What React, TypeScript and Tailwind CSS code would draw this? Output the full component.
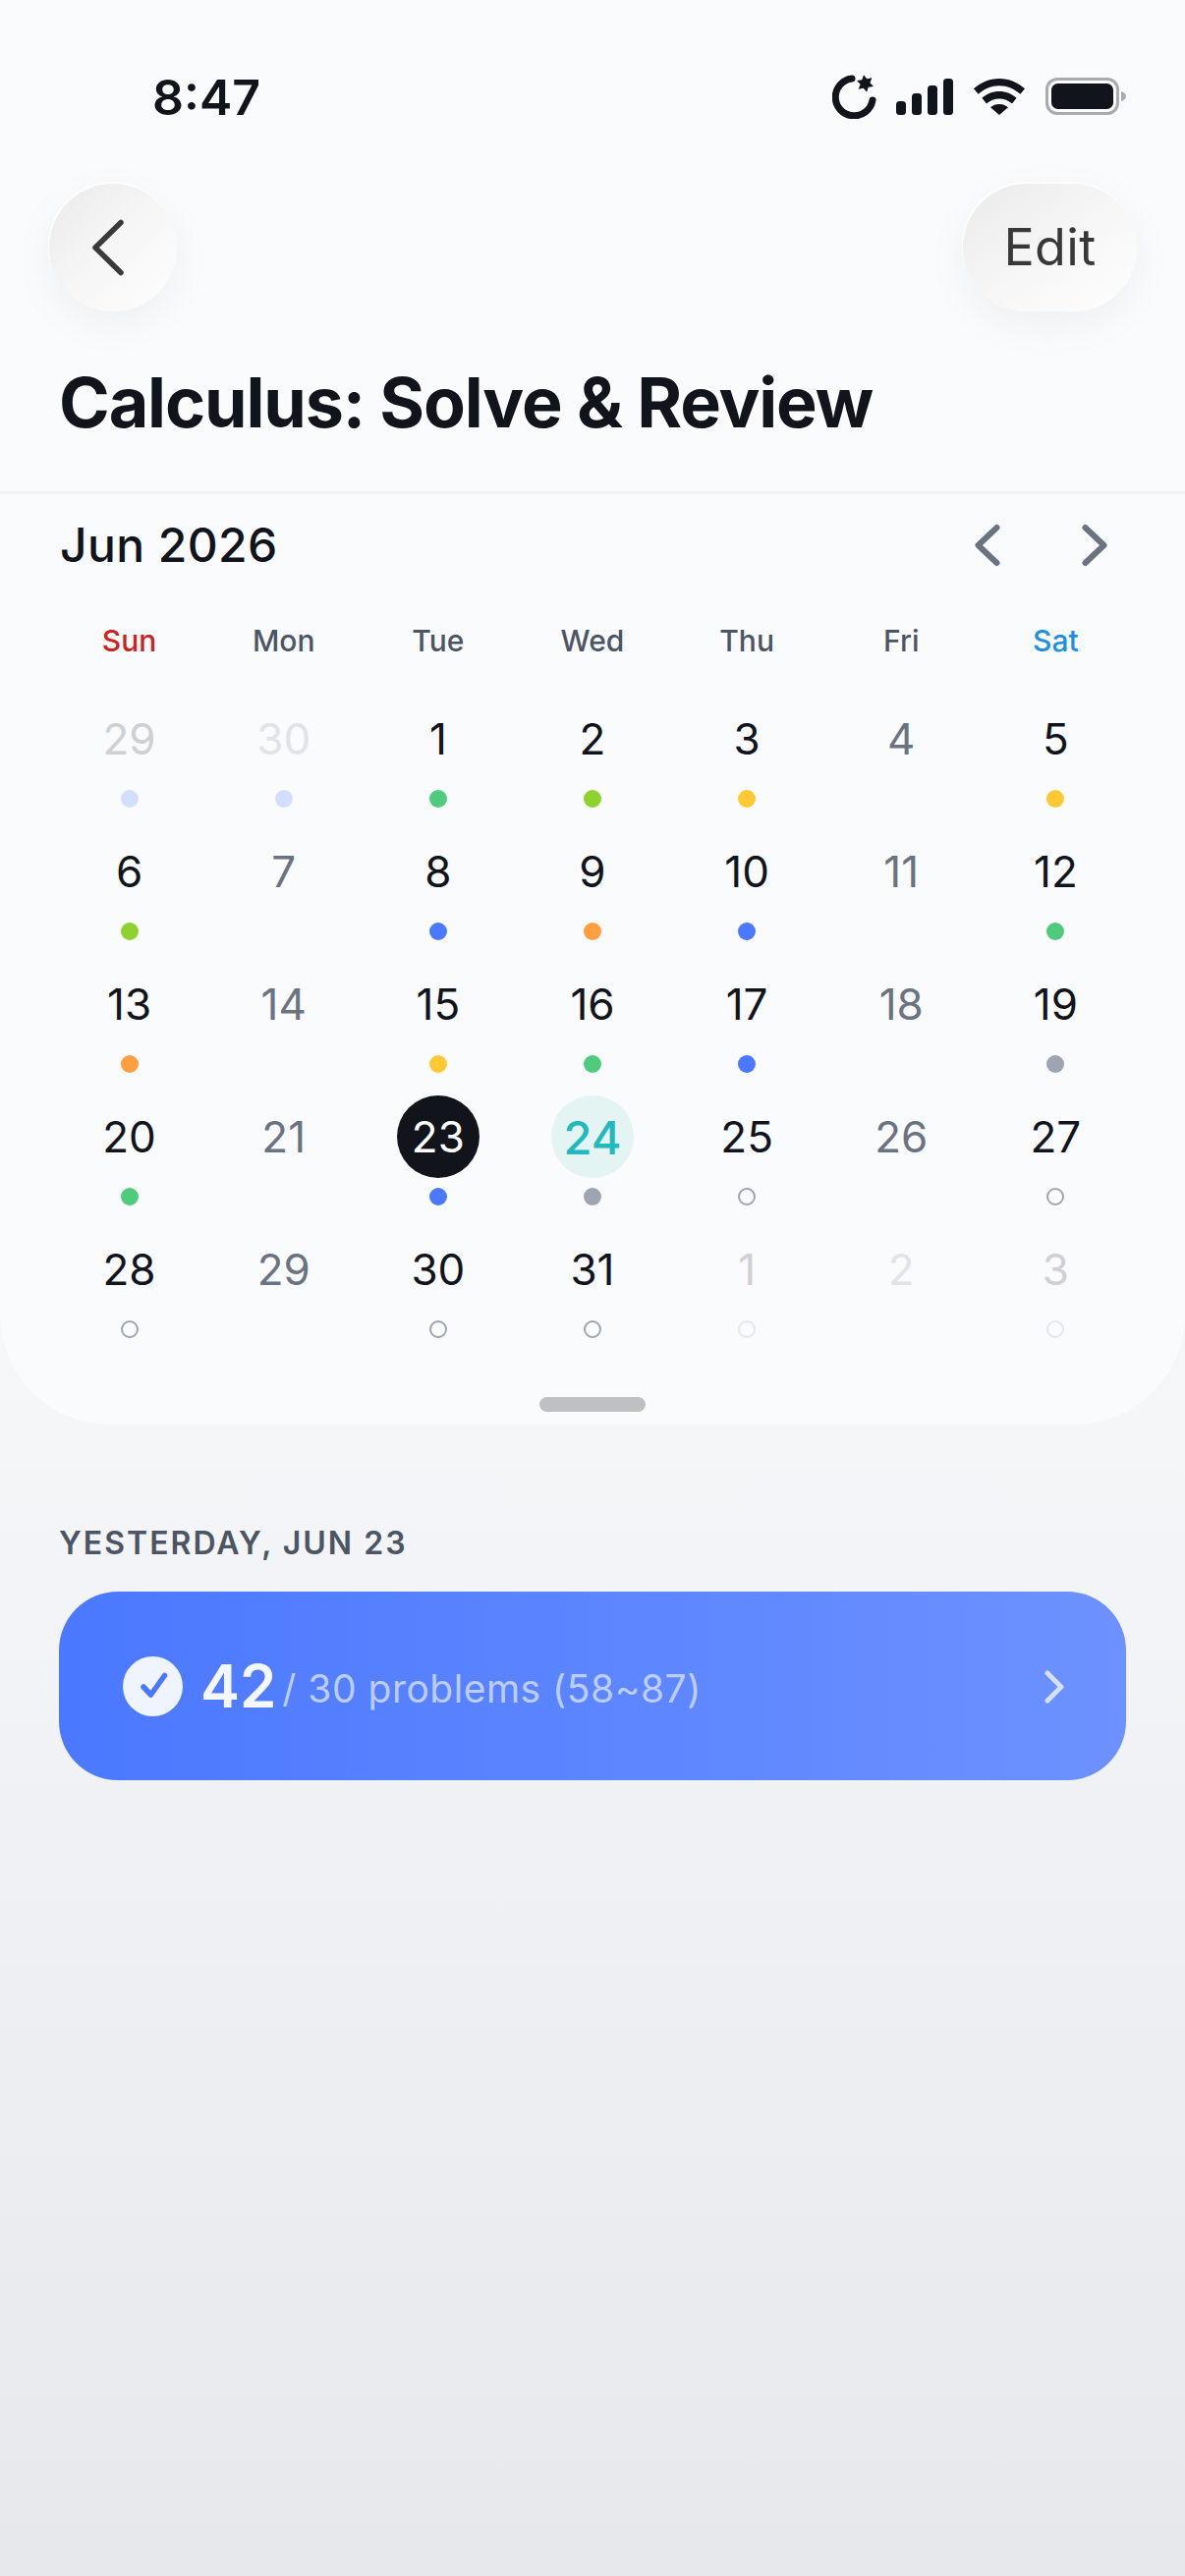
import React from "react";

type D = { n: number; tone: "dark" | "gray" | "faint" | "fainter" | "sel" | "today"; dot?: string; hollow?: "dark" | "light" };

const green = "bg-[#4fcb7c]";
const blue = "bg-[#4a78ff]";
const orange = "bg-[#ff9f3f]";
const yellow = "bg-[#ffc933]";
const lime = "bg-[#8ed22f]";
const gray = "bg-[#9ea4b0]";
const pale = "bg-[#d3dffa]";

const days: D[] = [
  { n: 29, tone: "faint", dot: pale },
  { n: 30, tone: "fainter", dot: pale },
  { n: 1, tone: "dark", dot: green },
  { n: 2, tone: "dark", dot: lime },
  { n: 3, tone: "dark", dot: yellow },
  { n: 4, tone: "gray" },
  { n: 5, tone: "dark", dot: yellow },
  { n: 6, tone: "dark", dot: lime },
  { n: 7, tone: "gray" },
  { n: 8, tone: "dark", dot: blue },
  { n: 9, tone: "dark", dot: orange },
  { n: 10, tone: "dark", dot: blue },
  { n: 11, tone: "gray" },
  { n: 12, tone: "dark", dot: green },
  { n: 13, tone: "dark", dot: orange },
  { n: 14, tone: "gray" },
  { n: 15, tone: "dark", dot: yellow },
  { n: 16, tone: "dark", dot: green },
  { n: 17, tone: "dark", dot: blue },
  { n: 18, tone: "gray" },
  { n: 19, tone: "dark", dot: gray },
  { n: 20, tone: "dark", dot: green },
  { n: 21, tone: "gray" },
  { n: 23, tone: "sel", dot: blue },
  { n: 24, tone: "today", dot: gray },
  { n: 25, tone: "dark", hollow: "dark" },
  { n: 26, tone: "gray" },
  { n: 27, tone: "dark", hollow: "dark" },
  { n: 28, tone: "dark", hollow: "dark" },
  { n: 29, tone: "gray" },
  { n: 30, tone: "dark", hollow: "dark" },
  { n: 31, tone: "dark", hollow: "dark" },
  { n: 1, tone: "faint", hollow: "light" },
  { n: 2, tone: "fainter" },
  { n: 3, tone: "faint", hollow: "light" },
];

const toneClass: Record<D["tone"], string> = {
  dark: "text-[44px] text-[#11141b]",
  gray: "text-[44px] text-[#6b7280]",
  faint: "text-[44px] text-[#cfd0d4]",
  fainter: "text-[44px] text-[#e2e3e6]",
  sel: "text-[44px] text-white bg-[#11141b]",
  today: "text-[47px] text-[#22b8bd] bg-[#e3f4f3] font-medium",
};

function Day({ d }: { d: D }) {
  return (
    <div className="flex flex-col items-center">
      <div className={`flex h-[84px] w-[84px] items-center justify-center rounded-full leading-none ${toneClass[d.tone]}`}>{d.n}</div>
      <div className="mt-[10px] h-[18px] w-[18px]">
        {d.dot && <div className={`h-[18px] w-[18px] rounded-full ${d.dot}`} />}
        {d.hollow === "dark" && <div className="h-[18px] w-[18px] rounded-full border-2 border-[#9ea4b0]" />}
        {d.hollow === "light" && <div className="h-[18px] w-[18px] rounded-full border-2 border-[#e6e7ea]" />}
      </div>
    </div>
  );
}

const starPoints = Array.from({ length: 12 }, (_, i) => {
  const r = i % 2 === 0 ? 9 : 5;
  const a = ((i * 30 + 20) * Math.PI) / 180;
  return `${(33.5 + r * Math.cos(a)).toFixed(2)},${(10 + r * Math.sin(a)).toFixed(2)}`;
}).join(" ");

function StatusIcons() {
  return (
    <div className="flex items-center">
      <svg width="46" height="46" viewBox="0 0 46 46" fill="none" className="mr-[19px]">
        <path d="M20 5A19 19 0 1 0 41 27" stroke="#11141b" strokeWidth="7" strokeLinecap="round" />
        <polygon points={starPoints} fill="#11141b" />
      </svg>
      <svg width="58" height="37" viewBox="0 0 58 37" className="mr-[21px]" fill="#11141b">
        <rect x="0" y="23" width="10" height="14" rx="3.500" />
        <rect x="16" y="15" width="10" height="22" rx="3.500" />
        <rect x="32" y="7" width="10" height="30" rx="3.500" />
        <rect x="48" y="0" width="10" height="37" rx="3.500" />
      </svg>
      <svg width="52" height="37" viewBox="0 0 52 37" className="mr-[21px]" fill="#11141b">
        <path d="M26 0C16 0 7.200 3.800 0 10.200l4.600 5.600C10.600 10.400 17.900 7.200 26 7.200s15.400 3.200 21.400 8.600l4.600-5.600C44.800 3.800 36 0 26 0z" />
        <path d="M26 13c-6.800 0-12.800 2.500-17.600 6.800l4.600 5.600c3.500-3.100 8-5 13-5s9.500 1.900 13 5l4.600-5.600C38.800 15.500 32.800 13 26 13z" />
        <path d="M26 26c-3.500 0-6.500 1.200-9 3.300L26 37l9-7.700C32.500 27.200 29.500 26 26 26z" />
      </svg>
      <svg width="82" height="38" viewBox="0 0 82 38">
        <rect x="1.500" y="1.500" width="72" height="35" rx="10.500" fill="none" stroke="#a9abaf" strokeWidth="3" />
        <rect x="6" y="6" width="63" height="26" rx="6.500" fill="#11141b" />
        <path d="M77 14c2.800.6 5 2.600 5 5s-2.200 4.400-5 5z" fill="#a9abaf" />
      </svg>
    </div>
  );
}

const glass =
  "flex h-[130px] items-center justify-center bg-linear-to-br from-[#eaeaea] via-[#f6f6f6] to-[#fefefe] shadow-[-1px_-2px_1px_#ffffff,0_12px_44px_rgba(0,0,0,0.05)]";

export default function App() {
  return (
    <div className="flex min-h-[2622px] w-[1206px] flex-col bg-linear-to-b from-[#fbfcfe] via-[#f5f6f8] via-55% to-[#e7e8ec] font-['Inter',sans-serif]">
      <div className="rounded-b-[112px] bg-[#fafbfd]">
        <div className="flex h-[187px] items-start justify-between pl-[155px] pr-[60px] pt-[70px]">
          <div className="text-[50px] font-semibold leading-[58px] text-[#11141b]">8:47</div>
          <div className="mt-[5px]">
            <StatusIcons />
          </div>
        </div>
        <div className="flex items-center justify-between pl-[50px] pr-[49px]">
          <div className={`${glass} w-[130px] rounded-full`}>
            <svg width="38" height="58" viewBox="0 0 38 58" fill="none" className="mr-[6px]">
              <path d="M30 3.500L4 29l26 25.500" stroke="#3a3a3a" strokeWidth="5.500" strokeLinecap="round" strokeLinejoin="round" />
            </svg>
          </div>
          <div className={`${glass} w-[177px] rounded-[65px] text-[52px] leading-none tracking-[0.3px] text-[#383838]`}>Edit</div>
        </div>
        <div className="border-b-[3px] border-[#f1f2f5] pb-[45px] pl-[60px] pt-[48px]">
          <div className="text-[70px] font-bold leading-[90px] tracking-[-1.150px] text-[#11141b]">Calculus: Solve &amp; Review</div>
        </div>
        <div className="flex h-[103px] items-center justify-between pl-[61px] pr-[79px]">
          <div className="text-[48px] font-medium leading-none tracking-[0.4px] text-[#11141b]">Jun 2026</div>
          <div className="flex items-center gap-[83px]">
            <svg width="26" height="44" viewBox="0 0 26 44" fill="none">
              <path d="M22.500 4L3.500 22l19 18" stroke="#6b7280" strokeWidth="6" strokeLinecap="round" strokeLinejoin="round" />
            </svg>
            <svg width="26" height="44" viewBox="0 0 26 44" fill="none">
              <path d="M3.500 4l19 18-19 18" stroke="#6b7280" strokeWidth="6" strokeLinecap="round" strokeLinejoin="round" />
            </svg>
          </div>
        </div>
        <div className="grid h-[92px] grid-cols-7 items-start px-[53px] pt-[30px] text-center text-[30px] font-medium leading-[32px] text-[#4b5563]">
          <div className="text-[#cc2222]">Sun</div>
          <div>Mon</div>
          <div>Tue</div>
          <div>Wed</div>
          <div>Thu</div>
          <div>Fri</div>
          <div className="text-[#1f8fe0]">Sat</div>
        </div>
        <div className="grid grid-cols-7 gap-y-[23px] px-[53px] pt-[12px]">
          {days.map((d, i) => (
            <Day key={i} d={d} />
          ))}
        </div>
        <div className="flex justify-center pb-[13px] pt-[60px]">
          <div className="h-[15px] w-[108px] rounded-full bg-[#bfc0c4]" />
        </div>
      </div>

      <div className="px-[60px] pt-[103px]">
        <div className="text-[32px] font-semibold leading-[36px] tracking-[2px] text-[#4b5563]">YESTERDAY, JUN 23</div>
        <div className="mt-[31px] flex h-[192px] items-center rounded-[60px] bg-linear-to-r from-[#4a78ff] to-[#6d91ff] pl-[65px] pr-[63px]">
          <div className="flex h-[61px] w-[61px] shrink-0 items-center justify-center rounded-full bg-[#f0f4ff]">
            <svg width="36" height="36" viewBox="0 0 36 36" fill="none">
              <path d="M8 19l7.500 8L29.500 7.500" stroke="#4a78ff" strokeWidth="5.500" strokeLinecap="round" strokeLinejoin="round" />
            </svg>
          </div>
          <div className="ml-[18px] text-[60px] font-semibold leading-none text-[#f5f7ff]">42</div>
          <div className="ml-[6px] mt-[4px] text-[39px] leading-none tracking-[0.5px] text-[#bccdff]">/ 30 problems (58~87)</div>
          <svg width="20" height="34" viewBox="0 0 20 34" fill="none" className="ml-auto mt-[2px]">
            <path d="M3 3l14 14L3 31" stroke="#d6e0ff" strokeWidth="5" strokeLinecap="round" strokeLinejoin="round" />
          </svg>
        </div>
      </div>
    </div>
  );
}
